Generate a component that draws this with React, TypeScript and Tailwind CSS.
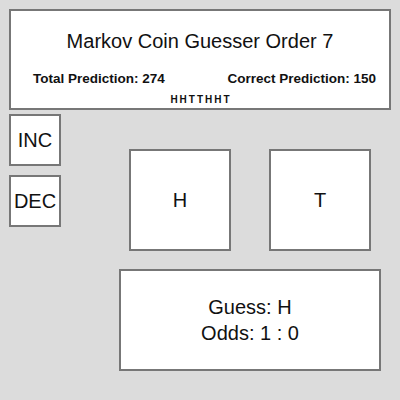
export default function App() {
  return (
    <div
      className="w-[400px] h-[400px] bg-[#dcdcdc] p-[9px] text-[#111] overflow-hidden"
      style={{ fontFamily: '"Liberation Sans", Arial, sans-serif' }}
    >
      {/* Header panel */}
      <div className="h-[101px] border-2 border-[#777] bg-white flex flex-col">
        <h1 className="text-[20px] leading-none text-center mt-[20px]">Markov Coin Guesser Order 7</h1>
        <div className="flex justify-between pl-[22px] pr-[13px] mt-[21px] text-[13.5px] leading-none font-semibold">
          <span>Total Prediction: 274</span>
          <span>Correct Prediction: 150</span>
        </div>
        <div className="text-center text-[10px] leading-none font-bold tracking-[2px] mt-[9px] pl-[2px]">HHTTHHT</div>
      </div>

      <div className="flex">
        {/* Order buttons */}
        <div className="flex flex-col gap-[9px] mt-[4px] w-[52px]">
          <button className="h-[52px] border-2 border-[#777] bg-white text-[20px] flex items-center justify-center">INC</button>
          <button className="h-[52px] border-2 border-[#777] bg-white text-[20px] flex items-center justify-center">DEC</button>
        </div>

        <div className="ml-[58px] w-[262px]">
          <div className="flex gap-[38px] pl-[10px] mt-[39px]">
            <button className="w-[102px] h-[102px] border-2 border-[#777] bg-white text-[20px] flex items-center justify-center">H</button>
            <button className="w-[102px] h-[102px] border-2 border-[#777] bg-white text-[20px] flex items-center justify-center">T</button>
          </div>
          <div className="mt-[18px] h-[102px] border-2 border-[#777] bg-white flex flex-col items-center justify-center text-[20px] leading-[26px]">
            <div>Guess: H</div>
            <div>Odds: 1 : 0</div>
          </div>
        </div>
      </div>
    </div>
  );
}
